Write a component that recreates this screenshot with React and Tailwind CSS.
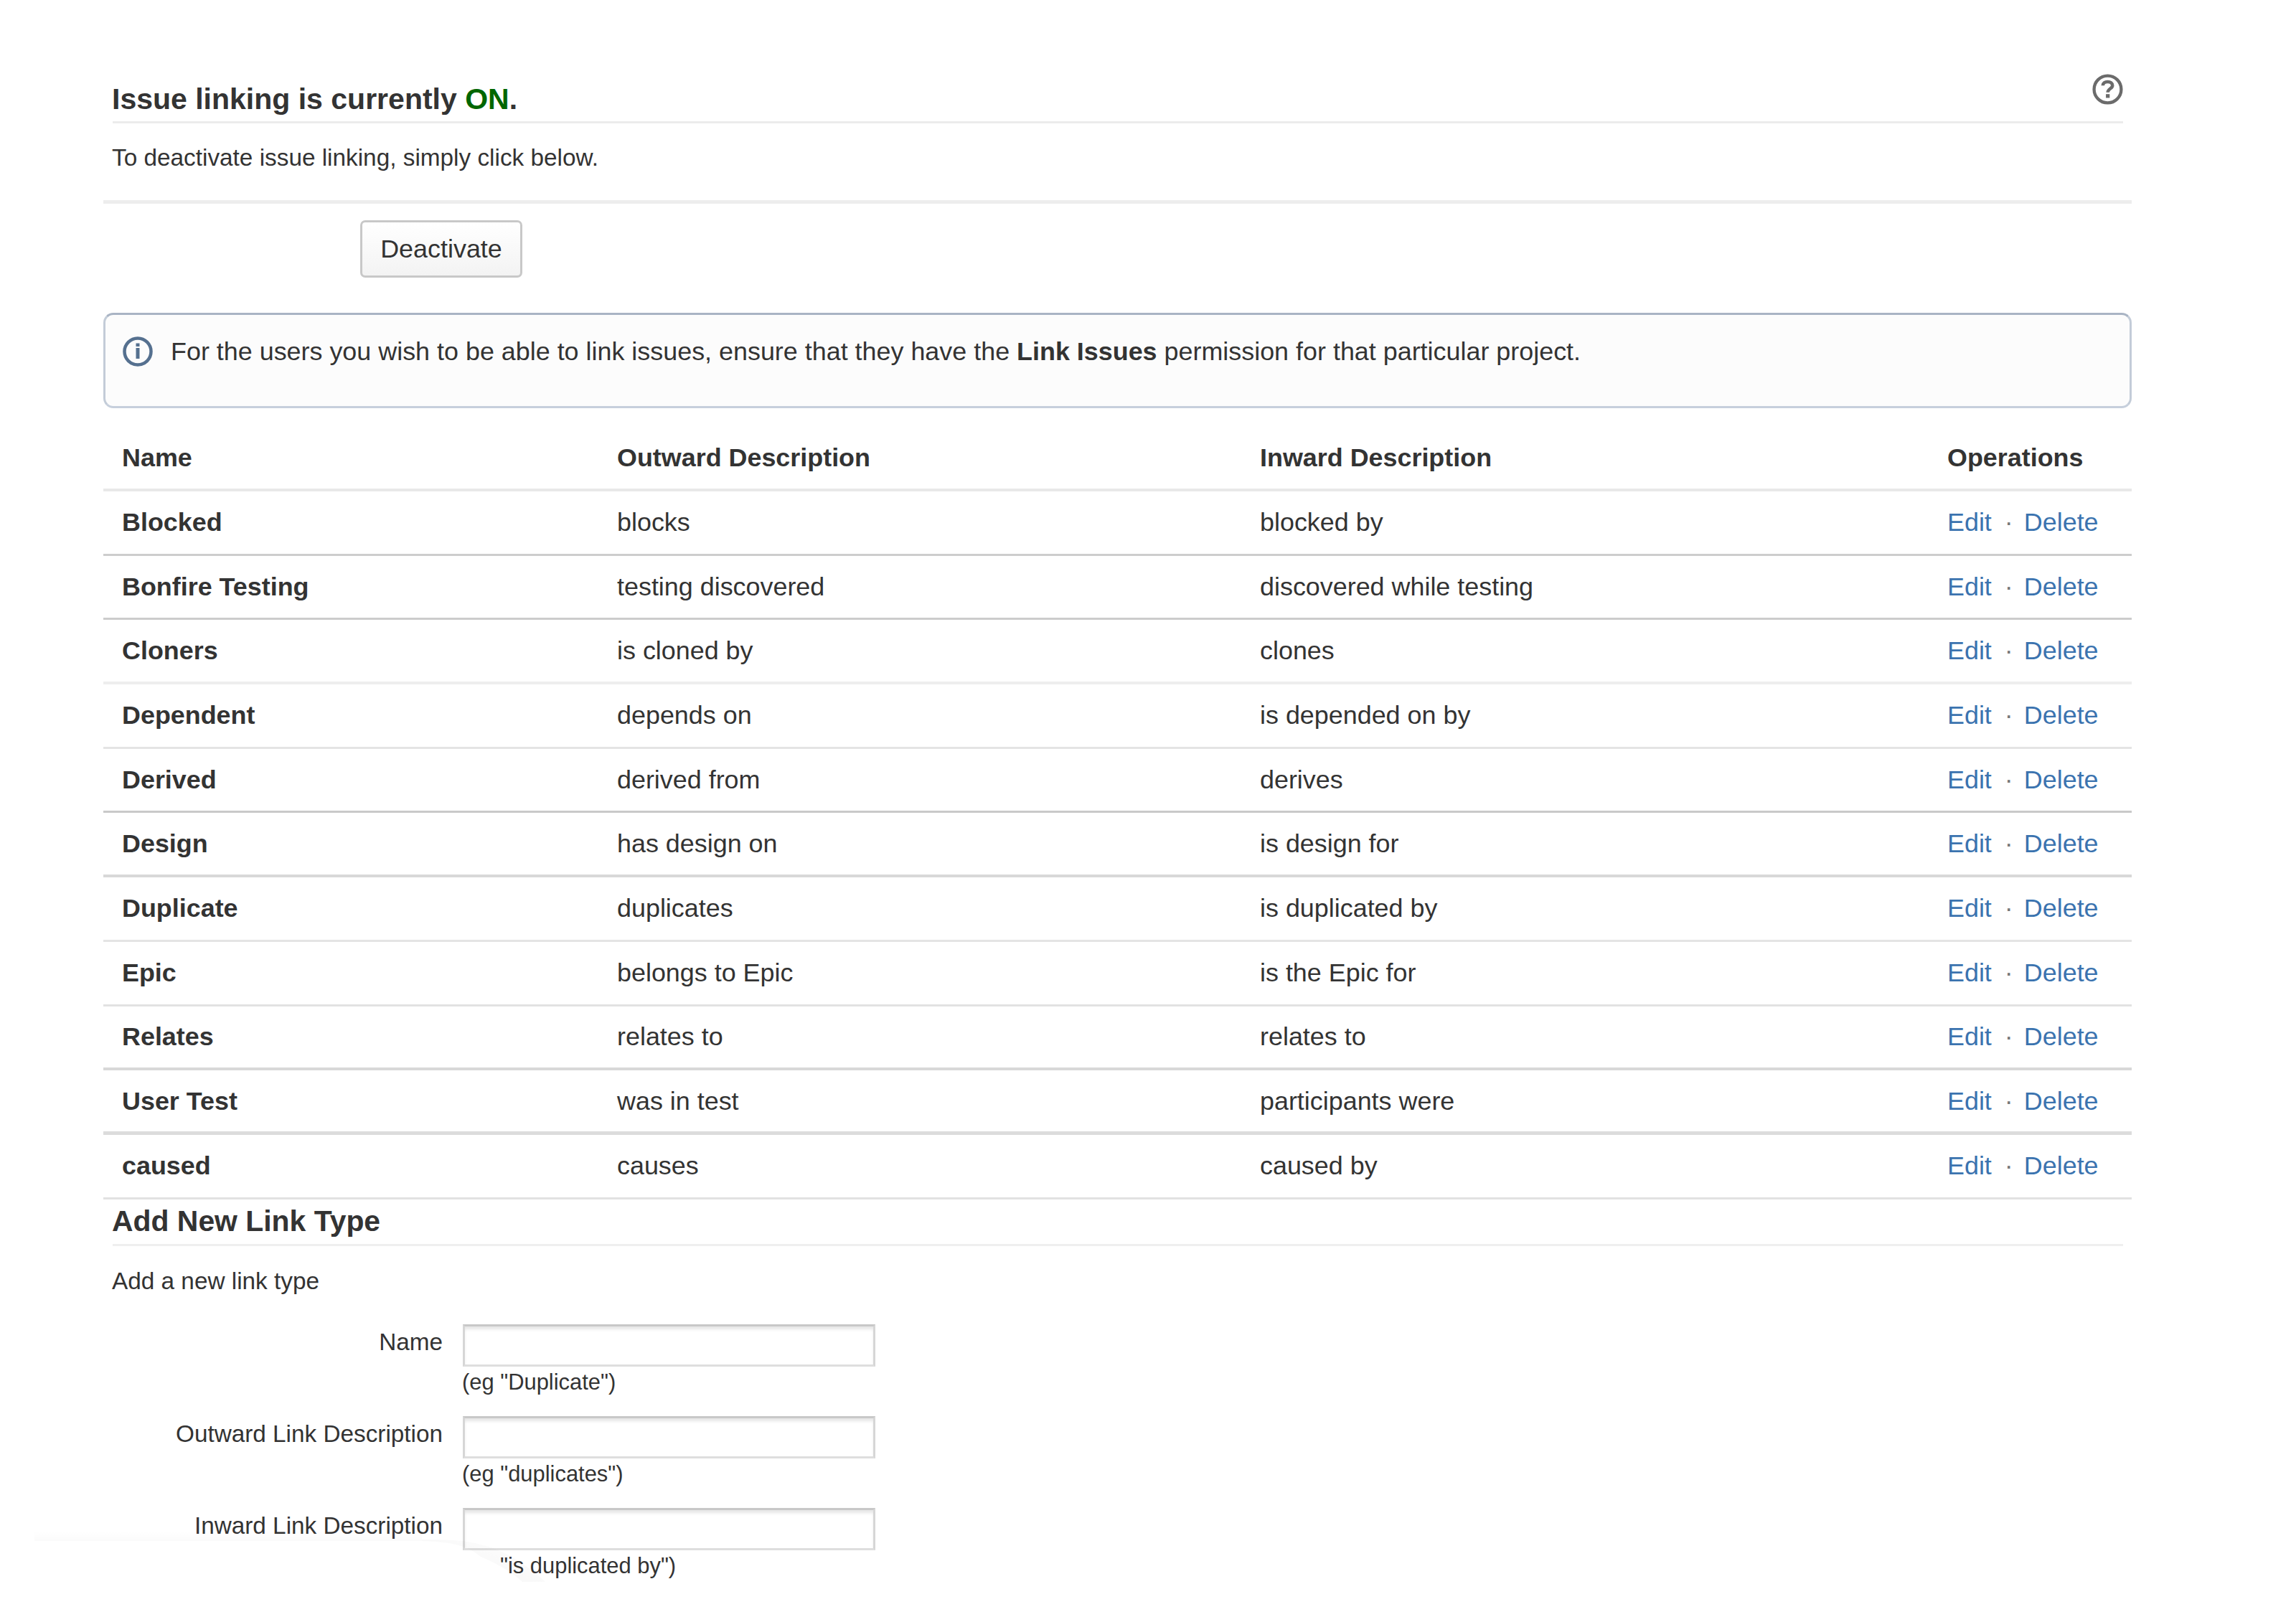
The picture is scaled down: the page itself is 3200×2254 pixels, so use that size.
const linkTypes = [
    { name: "Blocked", outward: "blocks", inward: "blocked by", line: "border-b-[3px] border-[#cdcdcd]" },
    { name: "Bonfire Testing", outward: "testing discovered", inward: "discovered while testing", line: "border-b-[3px] border-[#cccccc]" },
    { name: "Cloners", outward: "is cloned by", inward: "clones", line: "border-b-[4px] border-[#eeeeee]" },
    { name: "Dependent", outward: "depends on", inward: "is depended on by", line: "border-b-[3px] border-[#e4e4e4]" },
    { name: "Derived", outward: "derived from", inward: "derives", line: "border-b-[3px] border-[#c9c9c9]" },
    { name: "Design", outward: "has design on", inward: "is design for", line: "border-b-[4px] border-[#d8d8d8]" },
    { name: "Duplicate", outward: "duplicates", inward: "is duplicated by", line: "border-b-[3px] border-[#e4e4e4]" },
    { name: "Epic", outward: "belongs to Epic", inward: "is the Epic for", line: "border-b-[3px] border-[#e2e2e2]" },
    { name: "Relates", outward: "relates to", inward: "relates to", line: "border-b-[4px] border-[#d8d8d8]" },
    { name: "User Test", outward: "was in test", inward: "participants were", line: "border-b-[5px] border-[#dcdcdc]" },
    { name: "caused", outward: "causes", inward: "caused by", line: "border-b-[3px] border-[#e2e2e2]" },
];

const fields = [
    { id: "name", label: "Name", hint: "(eg \"Duplicate\")", indent: "" },
    { id: "outward", label: "Outward Link Description", hint: "(eg \"duplicates\")", indent: "" },
    { id: "inward", label: "Inward Link Description", hint: "\"is duplicated by\")", indent: "pl-[53px]" },
];

function HelpIcon() {
    return (
        <svg className="-mt-[12px] h-[43px] w-[43px]" viewBox="0 0 45 45" fill="none" stroke="#6b6b6b">
            <circle cx="22.5" cy="22.5" r="19.8" strokeWidth="4.5" />
            <path d="M15.5 17c0-3.5 3-5.5 7-5.5s7 2 7 5.5c0 4.5-6.8 4.5-6.8 10" strokeWidth="4.8" />
            <path d="M22.7 29.5v5.5" strokeWidth="5.5" />
        </svg>
    );
}

function InfoIcon() {
    return (
        <svg className="h-[42px] w-[42px] shrink-0" viewBox="0 0 42 42" fill="none" stroke="#55708f">
            <circle cx="21" cy="21" r="18.5" strokeWidth="4.5" />
            <path d="M21 9.5v4.5M21 16v15" strokeWidth="5" />
        </svg>
    );
}

// Faint edge of the page curl under the form
function PageCurl() {
    return (
        <svg className="pointer-events-none absolute left-[48px] top-[2134px] h-[74px] w-[720px]" viewBox="0 0 720 74">
            <defs>
                <linearGradient id="edge" x1="0" y1="0" x2="0" y2="1">
                    <stop offset="0" stopColor="#000000" stopOpacity="0" />
                    <stop offset="1" stopColor="#000000" stopOpacity="0.018" />
                </linearGradient>
                <linearGradient id="fold" x1="1" y1="0" x2="0.3" y2="0.6">
                    <stop offset="0" stopColor="#000000" stopOpacity="0" />
                    <stop offset="1" stopColor="#000000" stopOpacity="0.03" />
                </linearGradient>
            </defs>
            <path d="M0 0H540V14H0z" fill="url(#edge)" />
            <path d="M540 14C585 15 605 22 622 36C645 46 664 56 680 71L712 71C690 50 655 26 625 20C600 12 570 12 540 12z" fill="url(#fold)" />
        </svg>
    );
}

export default function App() {
    return (
        <div className="relative h-[2254px] w-[3200px] overflow-hidden bg-white pl-[144px] pr-[229px] font-['Liberation_Sans',Arial,sans-serif] text-[#333333]">
            <div className="ml-[13px] mr-[12px] flex h-[172px] items-start justify-between border-b-[3px] border-[#ececec] pt-[115px]">
                <h2 className="-ml-px text-[41px] font-bold leading-[46px]">
                    Issue linking is currently <span className="text-[#006600]">ON</span>.
                </h2>
                <HelpIcon />
            </div>
            <p className="ml-[12px] mt-[28px] text-[33.35px] leading-[40px]">To deactivate issue linking, simply click below.</p>
            <hr className="mt-[39px] border-t-[5px] border-[#ededed]" />

            <button className="ml-[358px] mt-[23px] block h-[80px] w-[226px] rounded-[7px] border-[3px] border-[#c8c8c8] bg-linear-to-b from-white to-[#f3f3f3] text-[35.9px] leading-[40px]">
                Deactivate
            </button>

            <div className="mt-[49px] flex h-[133px] items-start rounded-[14px] border-[3px] border-t-[#a9b4c4] border-r-[#c3ccd8] border-b-[#c6cfdc] border-l-[#c3ccd8] bg-[#fcfcfc] pl-[24px] pt-[30px]">
                <InfoIcon />
                <p className="ml-[25px] whitespace-nowrap text-[35.9px] leading-[42px]">
                    For the users you wish to be able to link issues, ensure that they have the <b>Link Issues</b> permission for that particular project.
                </p>
            </div>

            <div className="mt-[26px] text-[35.9px] leading-[42px]">
                <div className="grid h-[90px] grid-cols-[690px_896px_958px_1fr] items-center border-b-[4px] border-[#e8e8e8] pl-[26px] font-bold">
                    <div>Name</div>
                    <div>Outward Description</div>
                    <div>Inward Description</div>
                    <div>Operations</div>
                </div>
                { linkTypes.map((type) => (
                    <div key={ type.name } className={ `grid h-[89.7px] grid-cols-[690px_896px_958px_1fr] items-center pl-[26px] ${ type.line }` }>
                        <div className="font-bold">{ type.name }</div>
                        <div>{ type.outward }</div>
                        <div>{ type.inward }</div>
                        <div className="flex text-[#3b73af]">
                            <a>Edit</a>
                            <span className="ml-[18px] mr-[15px] text-[#777777]">·</span>
                            <a>Delete</a>
                        </div>
                    </div>
                )) }
            </div>

            <h2 className="ml-[13px] mr-[12px] border-b-[3px] border-[#efefef] pb-[9px] pt-[7px] text-[40.9px] font-bold leading-[46px]">
                <span className="-ml-px">Add New Link Type</span>
            </h2>
            <p className="ml-[12px] mt-[29px] text-[33.35px] leading-[40px]">Add a new link type</p>

            <form className="mt-[40px]">
                { fields.map((field) => (
                    <div key={ field.id } className="flex h-[128.4px] items-start">
                        <label htmlFor={ field.id } className="mt-[5px] w-[473px] text-right text-[33.3px] leading-[40px]">{ field.label }</label>
                        <div className="ml-[28px]">
                            <input
                                id={ field.id }
                                type="text"
                                className="block h-[59px] w-[575px] border-[3px] border-x-[#d6d6d6] border-b-[#dedede] border-t-[#c8c8c8] bg-white shadow-[inset_0_5px_4px_-1px_#e6e6e6]"
                            />
                            <div className={ `-ml-px mt-[5px] text-[30.9px] leading-[34px] ${ field.indent }` }>{ field.hint }</div>
                        </div>
                    </div>
                )) }
            </form>
            <PageCurl />
        </div>
    );
}
